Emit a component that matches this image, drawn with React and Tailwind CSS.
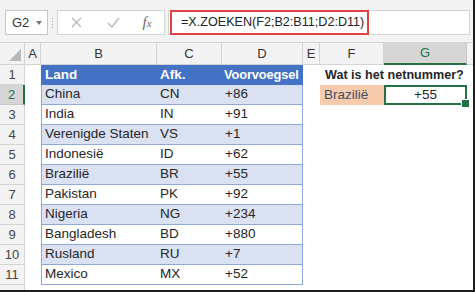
const rows = [
  ["China", "CN", "+86"],
  ["India", "IN", "+91"],
  ["Verenigde Staten", "VS", "+1"],
  ["Indonesië", "ID", "+62"],
  ["Brazilië", "BR", "+55"],
  ["Pakistan", "PK", "+92"],
  ["Nigeria", "NG", "+234"],
  ["Bangladesh", "BD", "+880"],
  ["Rusland", "RU", "+7"],
  ["Mexico", "MX", "+52"],
];

const cols = ["A", "B", "C", "D", "E", "F", "G"];

function RowHead({ n, selected }) {
  return (
    <div
      className={
        selected
          ? "bg-[#d6d6d6] border-b border-[#c8c8c8] border-r-2 border-r-[#217346] flex items-center justify-center text-[#217346] text-[13px]"
          : "bg-[#f3f3f3] border-b border-r border-[#d4d4d4] flex items-center justify-center text-[#444] text-[13px]"
      }
    >
      {n}
    </div>
  );
}

export default function App() {
  return (
    <div className="w-[475px] h-[292px] overflow-hidden bg-white border-r-2 border-b-2 border-[#1f1f1f] flex flex-col font-['Liberation_Sans',Arial,sans-serif] text-[13.5px] text-[#262626]">
      {/* toolbar */}
      <div className="h-[43px] shrink-0 bg-[#f3f3f3] border-b border-[#d4d4d4] flex items-start pt-[10px] pl-[5px] pr-[3px]">
        <div className="w-[43px] h-[25px] bg-white border border-[#c6c6c6] flex items-center pl-[6px] gap-[7px]">
          <span className="text-[13px] text-[#333]">G2</span>
          <svg width="6" height="4" viewBox="0 0 6 4">
            <path d="M0 0 L6 0 L3 4 Z" fill="#777" />
          </svg>
        </div>
        <div className="w-[9px] h-[25px] flex flex-col items-center justify-center gap-[2px]">
          <div className="w-[1px] h-[1px] bg-[#a0a0a0]" />
          <div className="w-[1px] h-[1px] bg-[#a0a0a0]" />
          <div className="w-[1px] h-[1px] bg-[#a0a0a0]" />
          <div className="w-[1px] h-[1px] bg-[#a0a0a0]" />
        </div>
        <div className="w-[108px] h-[25px] bg-white border border-[#d4d4d4] flex items-center pl-[6px]">
          <span className="w-[24px] flex justify-center">
            <svg width="11" height="11" viewBox="0 0 11 11">
              <path d="M1 1 L10 10 M10 1 L1 10" stroke="#b8b8b8" strokeWidth="1.3" fill="none" />
            </svg>
          </span>
          <span className="w-[24px] ml-[13px] flex justify-center">
            <svg width="13" height="11" viewBox="0 0 13 11">
              <path d="M1 6 L5 10 L12 1" stroke="#b8b8b8" strokeWidth="1.4" fill="none" />
            </svg>
          </span>
          <span className="w-[24px] ml-[10px] flex justify-center items-baseline font-['Liberation_Serif',serif] italic text-[#6a6a6a]">
            <span className="text-[15px]">f</span>
            <span className="text-[11px]">x</span>
          </span>
        </div>
        <div className="ml-[3px] flex-1 h-[25px] bg-white border border-[#d4d4d4] flex items-stretch pl-[1px]">
          <div className="-my-[1px] w-[199px] border-2 border-[#e04141] flex items-center pl-[9px] text-[12.6px] text-[#222] whitespace-nowrap">
            =X.ZOEKEN(F2;B2:B11;D2:D11)
          </div>
        </div>
      </div>

      {/* sheet */}
      <div className="flex-1 grid grid-cols-[25px_16px_116px_65px_81px_17px_64px_83px_1fr] grid-rows-[22px_repeat(11,20px)_1fr]">
        {/* corner */}
        <div className="bg-[#f3f3f3] border-r border-b border-[#d4d4d4] flex items-end justify-end pr-[3px] pb-[3px]">
          <svg width="12" height="12" viewBox="0 0 12 12">
            <path d="M12 0 L12 12 L0 12 Z" fill="#b8b8b8" />
          </svg>
        </div>
        {cols.map((c) =>
          c === "G" ? (
            <div
              key={c}
              className="bg-[#d6d6d6] border-r border-[#c8c8c8] border-b-2 border-b-[#217346] flex items-center justify-center text-[#217346] text-[13px]"
            >
              {c}
            </div>
          ) : (
            <div
              key={c}
              className="bg-[#f3f3f3] border-r border-b border-[#d4d4d4] flex items-center justify-center text-[#333] text-[13px]"
            >
              {c}
            </div>
          )
        )}
        <div className="bg-[#f3f3f3] border-b border-[#d4d4d4]" />

        {/* row 1 */}
        <RowHead n={1} />
        <div />
        <div className="bg-[#4472c4] text-white font-bold flex items-center pl-[4px]">Land</div>
        <div className="bg-[#4472c4] text-white font-bold flex items-center pl-[3px]">Afk.</div>
        <div className="bg-[#4472c4] text-white font-bold flex items-center pl-[2px] text-[12.8px] tracking-[-0.1px]">Voorvoegsel</div>
        <div />
        <div className="col-span-2 font-bold flex items-center pl-[5px] whitespace-nowrap text-[12.6px]">
          Wat is het netnummer?
        </div>
        <div />

        {rows.map((r, i) => {
          const n = i + 2;
          const band = i % 2 === 0 ? "bg-[#d9e1f2]" : "bg-white";
          return [
            <RowHead key={"h" + n} n={n} selected={n === 2} />,
            <div key={"a" + n} />,
            <div key={"b" + n} className={`${band} border-l border-b border-[#8ea9db] flex items-center pl-[3px] whitespace-nowrap`}>
              {r[0]}
            </div>,
            <div key={"c" + n} className={`${band} border-b border-[#8ea9db] flex items-center pl-[3px]`}>
              {r[1]}
            </div>,
            <div key={"d" + n} className={`${band} border-b border-r border-[#8ea9db] flex items-center pl-[3px]`}>
              {r[2]}
            </div>,
            <div key={"e" + n} />,
            n === 2 ? (
              <div key={"f" + n} className="bg-[#f8cbad] flex items-center pl-[4px] text-[#3e4d68]">
                Brazilië
              </div>
            ) : (
              <div key={"f" + n} />
            ),
            n === 2 ? (
              <div key={"g" + n} className="relative z-10 border-2 border-[#217346] flex items-center justify-center">
                +55
                <div className="absolute right-[-5px] bottom-[-5px] w-[7px] h-[7px] bg-[#217346] border border-white box-content" />
              </div>
            ) : (
              <div key={"g" + n} />
            ),
            <div key={"x" + n} />,
          ];
        })}

        {/* partial row 12 */}
        <div className="bg-[#f3f3f3] border-r border-[#d4d4d4]" />
        <div className="col-span-8" />
      </div>
    </div>
  );
}
